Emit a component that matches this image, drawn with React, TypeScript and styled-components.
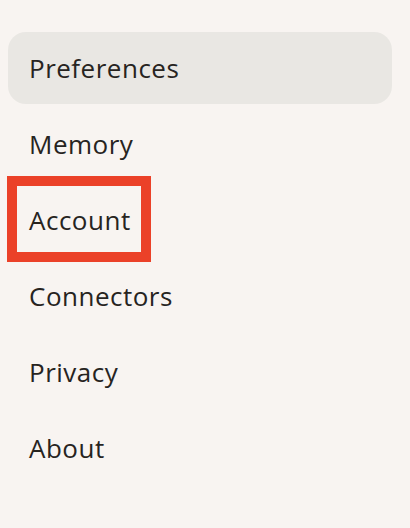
import React from 'react';
import styled, { createGlobalStyle } from 'styled-components';

const GlobalStyle = createGlobalStyle`
  html, body {
    margin: 0;
    padding: 0;
    background: #f8f4f1;
  }
`;

const items = ['Preferences', 'Memory', 'Account', 'Connectors', 'Privacy', 'About'];

export default function App() {
  return (
    <>
      <GlobalStyle />
      <Nav>
        {items.map((label) => (
          <Item key={label} active={label === 'Preferences'}>
            <Label>{label}</Label>
            {label === 'Account' && <Highlight />}
          </Item>
        ))}
      </Nav>
    </>
  );
}

const Nav = styled.nav`
  display: flex;
  flex-direction: column;
  gap: 4px;
  width: 384px;
  padding: 32px 0 0 8px;
  font-family: 'Open Sans', 'Liberation Sans', sans-serif;
`;

const Item = styled.div<{ active: boolean }>`
  position: relative;
  display: flex;
  align-items: center;
  height: 72px;
  padding-left: 21px;
  border-radius: 18px;
  background: ${({ active }) => (active ? '#e9e7e3' : 'transparent')};
  color: #27241f;
`;

const Label = styled.span`
  font-size: 26px;
  letter-spacing: 0.5px;
  line-height: 1;
`;

const Highlight = styled.div`
  position: absolute;
  left: -1px;
  top: -8px;
  width: 124px;
  height: 66px;
  border: 10px solid #eb4128;
`;
